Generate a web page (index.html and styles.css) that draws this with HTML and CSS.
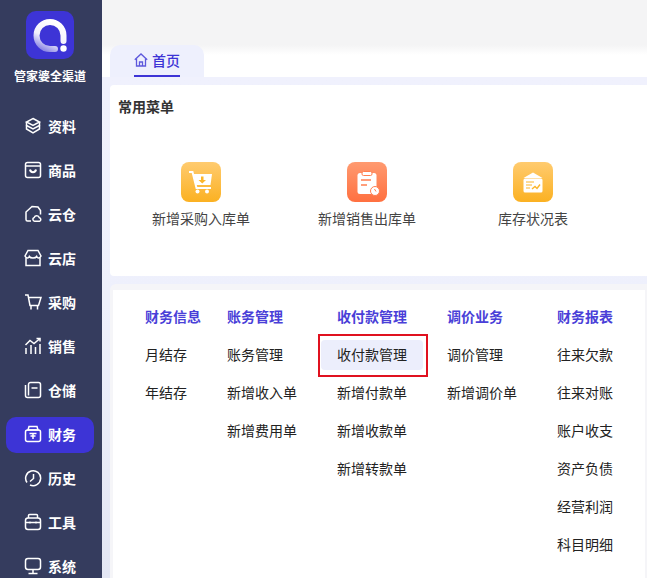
FILE: index.html
```html
<!DOCTYPE html>
<html>
<head>
  <title>管家婆全渠道</title>
  <link rel="stylesheet" href="styles.css">
</head>
<body>
  <div class="app">
    <div class="sidebar">
      <div class="logo">
        <svg width="48" height="48" viewBox="0 0 48 48">
          <defs>
            <linearGradient id="ring" x1="0.7" y1="0" x2="0.2" y2="1">
              <stop offset="0" stop-color="#ffffff"/>
              <stop offset="0.6" stop-color="#f2f1fc"/>
              <stop offset="1" stop-color="#8f8ae6"/>
            </linearGradient>
          </defs>
          <rect width="48" height="48" rx="10" fill="#3d34d6"/>
          <path d="M37.5 30V24.500A13.500 13.500 0 1 0 24 38H29" fill="none" stroke="url(#ring)" stroke-width="6" stroke-linecap="round"/>
          <circle cx="37.500" cy="37.500" r="3.200" fill="#fff"/>
        </svg>
      </div>
      <div class="brand">管家婆全渠道</div>
      <div class="nav">
        <div class="nav-item">
          <svg class="nav-icon" viewBox="0 0 18 18"><path d="M9 1.500 15.500 5 9 8.500 2.500 5Z"/><path d="M2.500 5V8.500L9 12 15.500 8.500V5"/><path d="M2.500 8.500V12L9 15.800 15.500 12V8.500"/></svg>
          <span>资料</span>
        </div>
        <div class="nav-item">
          <svg class="nav-icon" viewBox="0 0 18 18"><rect x="1.500" y="1.500" width="15" height="15" rx="2"/><path d="M1.500 5H16.500"/><path d="M6 8.500C6.500 12 11.500 12 12 8.500" stroke-width="2"/></svg>
          <span>商品</span>
        </div>
        <div class="nav-item">
          <svg class="nav-icon" viewBox="0 0 18 18"><path d="M7 16H3.500A1.500 1.500 0 0 1 2 14.500V7L8 1.500 14 2 16.500 5.500V9.500"/><path d="M11 16.200H15.500A1.800 1.800 0 0 0 15.300 12.700 2.700 2.700 0 0 0 10.200 12.500 1.900 1.900 0 0 0 11 16.200Z"/></svg>
          <span>云仓</span>
        </div>
        <div class="nav-item">
          <svg class="nav-icon" viewBox="0 0 18 18"><path d="M4 1.500H14L17 7C16 9.500 13.500 9.500 12.700 7.500 11.500 9.500 6.500 9.500 5.300 7.500 4.500 9.500 2 9.500 1 7Z"/><path d="M2 9V16.500H16V9"/></svg>
          <span>云店</span>
        </div>
        <div class="nav-item">
          <svg class="nav-icon" viewBox="0 0 18 18"><path d="M1 2H4L6 12.500H14.500L17 4.500H4.500"/><path d="M7 13V16.500M13.500 13V16.500"/></svg>
          <span>采购</span>
        </div>
        <div class="nav-item">
          <svg class="nav-icon" viewBox="0 0 18 18"><path d="M1.500 8 6 3.500 10 6.500 16 1.500"/><path d="M12.500 1.500H16V4.500"/><path d="M2 11V17M7 8V17M11.500 10V17M16 7V17"/></svg>
          <span>销售</span>
        </div>
        <div class="nav-item">
          <svg class="nav-icon" viewBox="0 0 18 18"><path d="M1.500 4V14.500A2 2 0 0 0 3.500 16.500H14.500A2 2 0 0 0 16.500 14.500V3.500A2 2 0 0 0 14.500 1.500H6.500A2 2 0 0 0 4.500 3.500V14.500"/><path d="M7.500 7H13.500"/></svg>
          <span>仓储</span>
        </div>
        <div class="nav-item active">
          <svg class="nav-icon" viewBox="0 0 18 18"><path d="M5 1.500H13L14 5H4Z"/><rect x="1.500" y="5" width="15" height="11.500" rx="2"/><path d="M5.500 8.500H12.500M9 8.500V14M6.500 11H11.500"/></svg>
          <span>财务</span>
        </div>
        <div class="nav-item">
          <svg class="nav-icon" viewBox="0 0 18 18"><path d="M3 13.500A7.500 7.500 0 1 1 6 16"/><path d="M9.500 5V9.500L6 12.500"/></svg>
          <span>历史</span>
        </div>
        <div class="nav-item">
          <svg class="nav-icon" viewBox="0 0 18 18"><path d="M4.500 5V2.500A1 1 0 0 1 5.500 1.500H12.500A1 1 0 0 1 13.500 2.500V5"/><rect x="1.500" y="5" width="15" height="11.500" rx="2.500"/><path d="M1.500 9.500H16.500M6 8.500V10.500M12 8.500V10.500"/></svg>
          <span>工具</span>
        </div>
        <div class="nav-item">
          <svg class="nav-icon" viewBox="0 0 18 18"><rect x="1.500" y="1.500" width="15" height="11" rx="2.500"/><path d="M9 12.500V16M4.500 16.500H13.500"/></svg>
          <span>系统</span>
        </div>
      </div>
    </div>

    <div class="main">
      <div class="topbar"></div>
      <div class="tabs">
        <div class="tab">
          <div class="tab-label">
            <svg class="tab-icon" viewBox="0 0 14 14"><path d="M0.800 6.800 7 1 13.200 6.800"/><path d="M2.500 5.500V13H11.500V5.500"/><path d="M5.500 13V9H8.500V13"/></svg>
            <span>首页</span>
          </div>
        </div>
      </div>

      <div class="content">
        <div class="card common">
          <div class="card-title">常用菜单</div>
          <div class="shortcuts">
            <div class="shortcut">
              <div class="shortcut-icon yellow">
                <svg width="40" height="40" viewBox="0 0 40 40">
                  <path d="M8 10H11.500L15.500 26H30" fill="none" stroke="#fff" stroke-width="2"/>
                  <path d="M12.500 12H31L29.500 23H15Z" fill="#fff"/>
                  <path d="M20 14.500H22.500V18H25L21.250 21.500 17.500 18H20Z" fill="#fbb62c"/>
                  <circle cx="16.500" cy="29.500" r="2" fill="#fff"/>
                  <circle cx="26" cy="29.500" r="2" fill="#fff"/>
                </svg>
              </div>
              <div class="shortcut-name">新增采购入库单</div>
            </div>
            <div class="shortcut">
              <div class="shortcut-icon orange">
                <svg width="40" height="40" viewBox="0 0 40 40">
                  <rect x="10.500" y="11" width="19" height="21" rx="2.500" fill="#fff"/>
                  <rect x="15" y="9.500" width="10" height="4" rx="1.500" fill="#fff" stroke="#ff7f50"/>
                  <path d="M14 18H24M14 23H20" stroke="#ff7f50" stroke-width="1.600"/>
                  <circle cx="28" cy="29" r="4.500" fill="#fff" stroke="#ff7f50"/>
                  <path d="M27.500 27 29 29.500" stroke="#ff7f50"/>
                </svg>
              </div>
              <div class="shortcut-name">新增销售出库单</div>
            </div>
            <div class="shortcut">
              <div class="shortcut-icon yellow">
                <svg width="40" height="40" viewBox="0 0 40 40">
                  <path d="M10.500 16 20 10.500 29.500 16Z" fill="#fff"/>
                  <rect x="10.500" y="16.500" width="19" height="14" rx="1.500" fill="#fff"/>
                  <path d="M13 20H21M13 23H19M13 26H17" stroke="#fbb62c" stroke-width="1.200"/>
                  <path d="M19 27 22 24.500 24 26.500 27 22.500" fill="none" stroke="#fbb62c" stroke-width="1.400"/>
                </svg>
              </div>
              <div class="shortcut-name">库存状况表</div>
            </div>
          </div>
        </div>

        <div class="card-wrap">
          <div class="card menus">
            <div class="menu-col col-a">
              <div class="menu-head">财务信息</div>
              <div class="menu-item">月结存</div>
              <div class="menu-item">年结存</div>
            </div>
            <div class="menu-col col-b">
              <div class="menu-head">账务管理</div>
              <div class="menu-item">账务管理</div>
              <div class="menu-item">新增收入单</div>
              <div class="menu-item">新增费用单</div>
            </div>
            <div class="menu-col col-b">
              <div class="menu-head">收付款管理</div>
              <div class="menu-item">
                <span class="current">收付款管理<i class="red-frame"></i></span>
              </div>
              <div class="menu-item">新增付款单</div>
              <div class="menu-item">新增收款单</div>
              <div class="menu-item">新增转款单</div>
            </div>
            <div class="menu-col col-b">
              <div class="menu-head">调价业务</div>
              <div class="menu-item">调价管理</div>
              <div class="menu-item">新增调价单</div>
            </div>
            <div class="menu-col">
              <div class="menu-head">财务报表</div>
              <div class="menu-item">往来欠款</div>
              <div class="menu-item">往来对账</div>
              <div class="menu-item">账户收支</div>
              <div class="menu-item">资产负债</div>
              <div class="menu-item">经营利润</div>
              <div class="menu-item">科目明细</div>
            </div>
          </div>
        </div>
      </div>
    </div>
  </div>
</body>
</html>
```

FILE: styles.css
```css
html, body {
  margin: 0;
  height: 578px;
  overflow: hidden;
}
body {
  font-family: "Noto Sans CJK SC", "Liberation Sans", sans-serif;
  font-size: 14px;
  background-color: #fff;
}
.app {
  display: flex;
  height: 578px;
}

/* left menu */
.sidebar {
  width: 102px;
  flex-shrink: 0;
  background-color: #353c5e;
  color: #fff;
}
.logo {
  display: flex;
  justify-content: center;
  padding: 11px 2px 0 0;
  height: 48px;
}
.brand {
  margin-top: 8px;
  padding-right: 2px;
  height: 18px;
  line-height: 18px;
  font-size: 12px;
  font-weight: 700;
  text-align: center;
}
.nav {
  margin-top: 24px;
}
.nav-item {
  display: flex;
  align-items: center;
  gap: 6px;
  width: 88px;
  height: 36px;
  margin: 0 0 8px 6px;
  padding: 0 0 2px 18px;
  box-sizing: border-box;
  font-weight: 700;
  border-radius: 10px;
}
.nav-item.active {
  background-color: #3d34d6;
}
.nav-icon {
  width: 18px;
  height: 18px;
  fill: none;
  stroke: #fff;
  stroke-width: 1.5;
}

/* right part */
.main {
  flex: 1;
  display: flex;
  flex-direction: column;
  min-width: 0;
}
.topbar {
  height: 45px;
  flex-shrink: 0;
  background-color: #f4f4f5;
}
.tabs {
  height: 32px;
  flex-shrink: 0;
  padding-left: 8px;
  background: linear-gradient(#f4f4f5, #fff 10px);
}
.tab {
  width: 94px;
  height: 32px;
  padding-left: 24px;
  box-sizing: border-box;
  background-color: #eef0fd;
  border-radius: 10px 10px 0 0;
}
.tab-label {
  display: inline-flex;
  align-items: center;
  gap: 4px;
  height: 30px;
  color: #3d34d6;
  font-weight: 500;
  border-bottom: 2px solid #3d34d6;
}
.tab-icon {
  width: 14px;
  height: 14px;
  fill: none;
  stroke: #5d58dc;
  stroke-width: 1.3;
}
.content {
  flex: 1;
  padding: 8px 0 0 8px;
  background: linear-gradient(#f0f1fd, #eef0fc 45%, #e3e6f4);
}
.card {
  background-color: #fff;
}
.common {
  height: 191px;
  border-radius: 4px 0 0 4px;
  padding: 12px 0 0 8px;
  box-sizing: border-box;
}
.card-title {
  height: 20px;
  line-height: 18px;
  font-size: 14px;
  font-weight: 700;
  color: #333;
}
.shortcuts {
  display: flex;
  margin-top: 45px;
}
.shortcut {
  width: 166px;
  text-align: center;
}
.shortcut-icon {
  width: 40px;
  height: 40px;
  margin: 0 auto;
  border-radius: 8px;
}
.shortcut-icon.yellow {
  background: linear-gradient(#ffcb6f, #fbb122);
}
.shortcut-icon.orange {
  background: linear-gradient(#ff9a70, #ff7040);
}
.shortcut-name {
  margin-top: 6px;
  line-height: 20px;
  color: #444;
}

.card-wrap {
  margin-top: 8px;
  height: 294px;
  padding: 6px 2px 0 3px;
  box-sizing: border-box;
  background-color: #f5f5f8;
  border-radius: 6px 0 0 0;
}
.menus {
  display: flex;
  height: 100%;
  padding: 8px 0 0 32px;
  box-sizing: border-box;
}
.menu-col {
  flex-shrink: 0;
}
.col-a {
  width: 82px;
}
.col-b {
  width: 110px;
}
.menu-head {
  height: 38px;
  line-height: 36px;
  font-weight: 700;
  color: #4a3fd8;
}
.menu-item {
  display: flex;
  align-items: flex-start;
  height: 38px;
  line-height: 36px;
  color: #222;
  white-space: nowrap;
}
.current {
  position: relative;
  display: block;
  width: 102px;
  height: 30px;
  margin: 4px 0 0 -16px;
  padding-left: 16px;
  box-sizing: border-box;
  line-height: 28px;
  background-color: #eceefc;
  border-radius: 4px;
}
.red-frame {
  position: absolute;
  top: -6px;
  left: -3px;
  width: 110px;
  height: 43px;
  box-sizing: border-box;
  border: 2px solid #e0111f;
}
```
